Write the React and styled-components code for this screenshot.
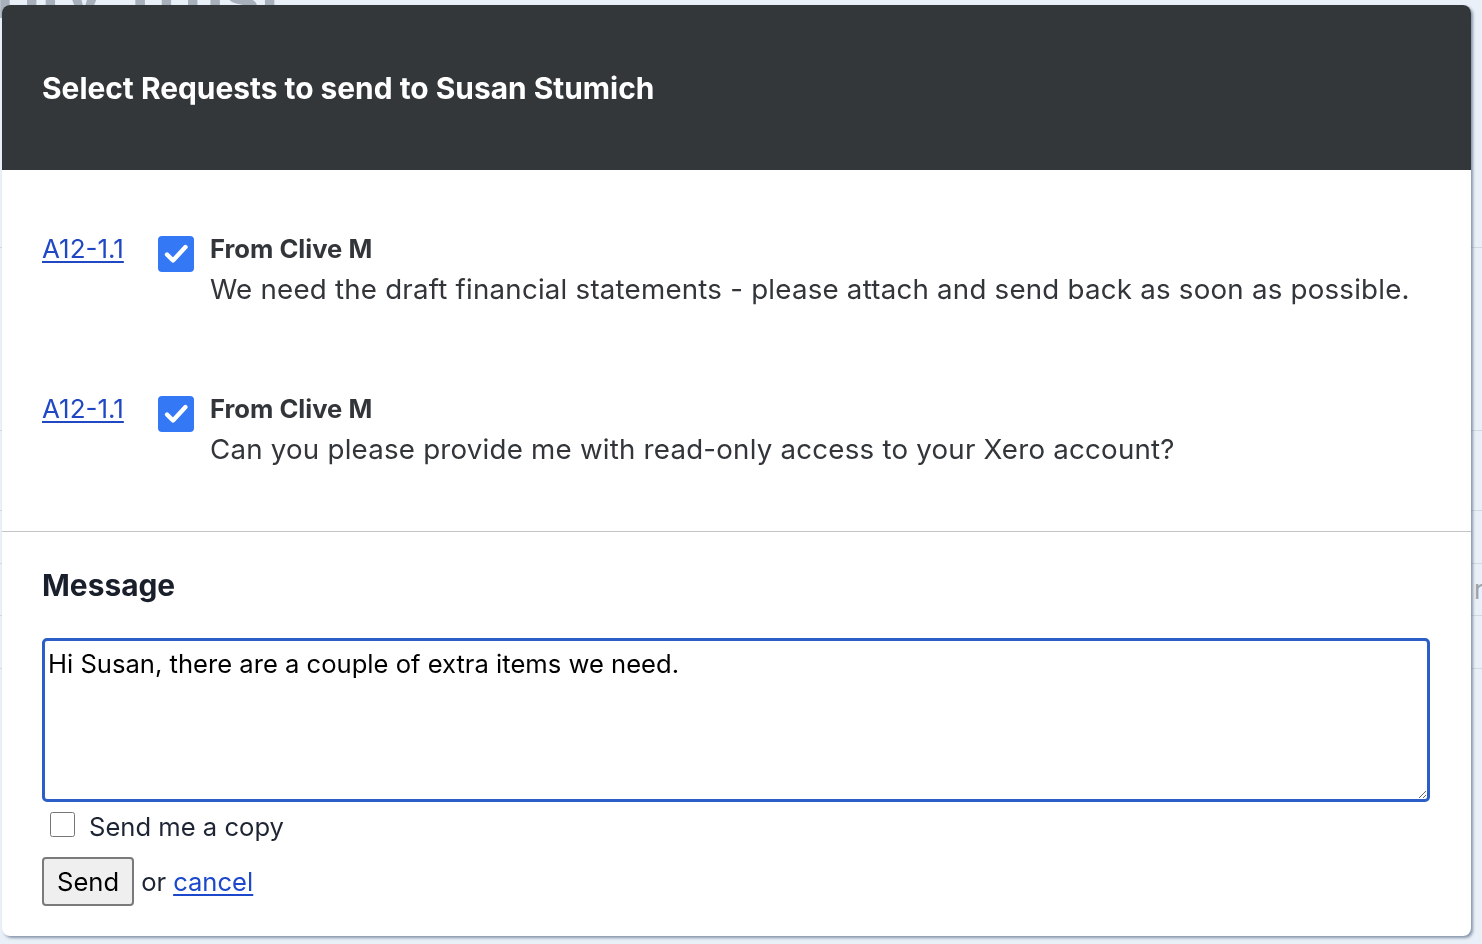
import React from "react";
import styled, { createGlobalStyle } from "styled-components";

const requests = [
  {
    ref: "A12-1.1",
    from: "From Clive M",
    text: "We need the draft financial statements - please attach and send back as soon as possible.",
  },
  {
    ref: "A12-1.1",
    from: "From Clive M",
    text: "Can you please provide me with read-only access to your Xero account?",
  },
];

const bgRows = [247, 430, 510, 563, 615, 668];

const App = () => {
  return (
    <>
      <GlobalStyle />
      <Page>
        <PageTitle>Charity Trust</PageTitle>
        <PageTable>
          {bgRows.map((y, i) => (
            <PageRow key={i} style={{ top: y }}>
              {i === 3 ? "r" : ""}
            </PageRow>
          ))}
        </PageTable>
      </Page>
      <Modal>
        <Header>
          <Title>Select Requests to send to Susan Stumich</Title>
        </Header>
        <RequestList>
          {requests.map((r, i) => (
            <Request key={i}>
              <RefLink href="#">{r.ref}</RefLink>
              <CheckBox>
                <svg width="28" height="28" viewBox="0 0 28 28">
                  <path
                    d="M5 14.5l6 6L23.5 7"
                    fill="none"
                    stroke="#fff"
                    strokeWidth="4.4"
                    strokeLinecap="round"
                    strokeLinejoin="round"
                  />
                </svg>
              </CheckBox>
              <RequestBody>
                <From>{r.from}</From>
                <Description>{r.text}</Description>
              </RequestBody>
            </Request>
          ))}
        </RequestList>
        <MessageSection>
          <MessageTitle>Message</MessageTitle>
          <MessageBox defaultValue="Hi Susan, there are a couple of extra items we need." />
          <CopyRow>
            <CopyCheck type="checkbox" />
            <span>Send me a copy</span>
          </CopyRow>
          <Actions>
            <SendButton>Send</SendButton>
            <span>or</span>
            <CancelLink href="#">cancel</CancelLink>
          </Actions>
        </MessageSection>
      </Modal>
    </>
  );
};

export default App;

const GlobalStyle = createGlobalStyle`
  html, body {
    margin: 0;
    padding: 0;
    background: #eaf0f8;
    font-family: Inter, "Noto Sans", sans-serif;
    overflow: hidden;
  }
`;

const Page = styled.div`
  height: 944px;
  position: relative;
  overflow: hidden;
`;

const PageTitle = styled.h1`
  margin: -44px 0 0 -128px;
  font-size: 64px;
  font-weight: 700;
  color: #a7b0bb;
`;

const PageTable = styled.div`
  position: absolute;
  inset: 0;
`;

const PageRow = styled.div`
  position: absolute;
  left: 0;
  right: 0;
  height: 1px;
  background: #d3dae3;
  color: #9aa2ab;
  font-size: 26px;
  line-height: 54px;
  text-indent: 1474px;
`;

const Modal = styled.div`
  position: fixed;
  left: 2px;
  top: 5px;
  width: 1469px;
  height: 931px;
  background: #fff;
  border-radius: 8px;
  box-shadow: 2px 2px 3px rgba(70, 90, 120, 0.6);
  overflow: hidden;
  display: flex;
  flex-direction: column;
`;

const Header = styled.div`
  height: 165px;
  background: #343739;
  display: flex;
  align-items: center;
  padding: 0 40px;
  flex-shrink: 0;
`;

const Title = styled.h2`
  margin: 0;
  color: #fff;
  font-size: 29.9px;
  font-weight: 700;
`;

const RequestList = styled.div`
  display: flex;
  flex-direction: column;
  gap: 80px;
  padding: 59px 40px 62px;
  border-bottom: 1px solid #c4c4c4;
`;

const Request = styled.div`
  display: grid;
  grid-template-columns: 116px 52px 1fr;
  align-items: start;
`;

const RefLink = styled.a`
  color: #2148c4;
  font-size: 26px;
  line-height: 40px;
  text-decoration: underline;
  text-underline-offset: 3px;
`;

const CheckBox = styled.span`
  width: 36px;
  height: 36px;
  margin-top: 7px;
  border-radius: 4px;
  background: #3478f6;
  display: flex;
  align-items: center;
  justify-content: center;
`;

const RequestBody = styled.div`
  display: flex;
  flex-direction: column;
  color: #32363a;
`;

const From = styled.div`
  font-size: 25.6px;
  font-weight: 700;
  line-height: 40px;
`;

const Description = styled.div`
  font-size: 27.7px;
  line-height: 40px;
  letter-spacing: 0.22px;
`;

const MessageSection = styled.div`
  display: flex;
  flex-direction: column;
  padding: 36px 41px 0 40px;
`;

const MessageTitle = styled.h3`
  margin: 0 0 36px;
  font-size: 29.9px;
  line-height: 34px;
  font-weight: 700;
  color: #1a1f2c;
`;

const MessageBox = styled.textarea`
  box-sizing: border-box;
  width: 1388px;
  height: 164px;
  border: 3px solid #2b5fc7;
  border-radius: 5px;
  padding: 8px 3px;
  font-family: Inter, "Noto Sans", sans-serif;
  font-size: 25.6px;
  line-height: 30px;
  color: #000;
  outline: none;
  resize: both;
`;

const CopyRow = styled.label`
  display: flex;
  align-items: center;
  gap: 14px;
  height: 46px;
  padding-left: 8px;
  padding-top: 1px;
  font-size: 25.6px;
  color: #1d2433;
`;

const CopyCheck = styled.input`
  width: 25px;
  height: 25px;
  margin: 0;
  margin-top: -4px;
`;

const Actions = styled.div`
  display: flex;
  align-items: center;
  gap: 7px;
  margin-top: 8px;
  font-size: 25.6px;
  color: #1d2433;
`;

const SendButton = styled.button`
  height: 49px;
  padding: 0 13px;
  background: #efefef;
  border: 2px solid #7a7a7a;
  border-radius: 4px;
  font-family: Inter, "Noto Sans", sans-serif;
  font-size: 25.6px;
  color: #000;
`;

const CancelLink = styled.a`
  color: #1c49cc;
  text-decoration: underline;
  text-underline-offset: 3px;
`;
